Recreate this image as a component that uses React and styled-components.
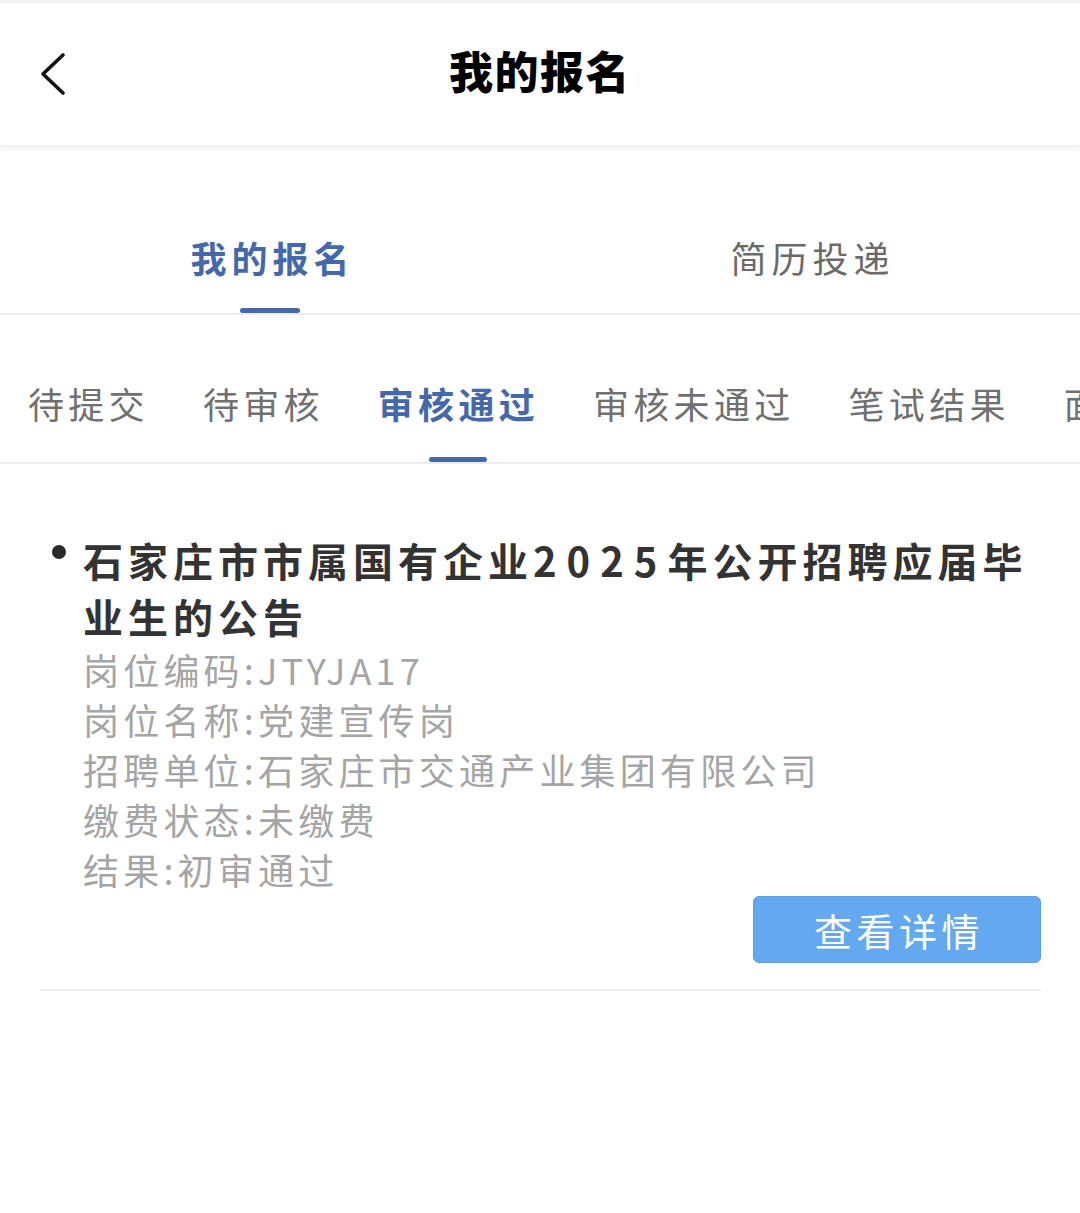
import styled, { createGlobalStyle } from "styled-components"

const GlobalStyle = createGlobalStyle`
  body {
    margin: 0;
    background: #ffffff;
    font-family: "Noto Sans CJK SC", "Noto Sans", sans-serif;
  }
`

const topTabs = ["我的报名", "简历投递"]
const statusTabs = ["待提交", "待审核", "审核通过", "审核未通过", "笔试结果", "面试结果"]

const details = [
    "岗位编码:JTYJA17",
    "岗位名称:党建宣传岗",
    "招聘单位:石家庄市交通产业集团有限公司",
    "缴费状态:未缴费",
    "结果:初审通过",
]

const App = () => {
    return (
        <Page>
            <GlobalStyle />
            <Header>
                <BackButton aria-label="返回">
                    <svg width="30" height="44" viewBox="0 0 30 44">
                        <polyline points="25,3 5,22 25,41" fill="none" stroke="#111" strokeWidth="3.6" strokeLinecap="round" strokeLinejoin="round" />
                    </svg>
                </BackButton>
                <HeaderTitle>我的报名</HeaderTitle>
            </Header>

            <TopTabBar>
                {topTabs.map((t, i) => (
                    <TopTab key={t}>
                        <TopTabLabel $active={i === 0}>{t}</TopTabLabel>
                        <Indicator $active={i === 0} $w={60} $gap={29} />
                    </TopTab>
                ))}
            </TopTabBar>

            <StatusTabBar>
                {statusTabs.map((t, i) => (
                    <StatusTab key={t}>
                        <StatusLabel $active={i === 2}>{t}</StatusLabel>
                        <Indicator $active={i === 2} $w={58} $gap={32} />
                    </StatusTab>
                ))}
            </StatusTabBar>

            <Card>
                <CardTitle>
                    石家庄市市属国有企业<Num>2025</Num>年公开招聘应届毕业生的公告
                </CardTitle>
                {details.map((d) => (
                    <DetailLine key={d}>{d}</DetailLine>
                ))}
                <Actions>
                    <DetailButton>查看详情</DetailButton>
                </Actions>
            </Card>
        </Page>
    )
}

const Page = styled.div`
  min-height: 1213px;
  background: #ffffff;
  overflow: hidden;
`

const Header = styled.header`
  position: relative;
  height: 142px;
  border-top: 3px solid #f1f1f1;
  display: flex;
  align-items: center;
  justify-content: center;
  box-shadow: 0 3px 5px rgba(0, 0, 0, 0.05);
  border-bottom: 2px solid #f2f2f2;
`

const BackButton = styled.button`
  position: absolute;
  left: 38px;
  top: 49px;
  padding: 0;
  border: none;
  background: none;
  display: flex;
`

const HeaderTitle = styled.h1`
  margin: 0;
  font-size: 44px;
  font-weight: 900;
  letter-spacing: 1.5px;
  color: #000;
  line-height: 1;
  margin-top: -8px;
`

const TopTabBar = styled.nav`
  display: flex;
  border-bottom: 2px solid #ececec;
`

const TopTab = styled.div`
  flex: 1;
  display: flex;
  flex-direction: column;
  align-items: center;
  padding-top: 89px;
`

const TopTabLabel = styled.span`
  font-size: 36px;
  line-height: 43px;
  letter-spacing: 5px;
  padding-left: 5px;
  font-weight: ${({ $active }) => ($active ? 700 : 400)};
  color: ${({ $active }) => ($active ? "#4468aa" : "#6a6a6a")};
`

const Indicator = styled.i`
  display: block;
  width: ${({ $w }) => $w}px;
  height: 5px;
  border-radius: 3px;
  margin-top: ${({ $gap }) => $gap}px;
  background: ${({ $active }) => ($active ? "#4468aa" : "transparent")};
`

const StatusTabBar = styled.nav`
  display: flex;
  gap: 54px;
  padding-left: 28px;
  white-space: nowrap;
  border-bottom: 2px solid #ececec;
`

const StatusTab = styled.div`
  flex-shrink: 0;
  display: flex;
  flex-direction: column;
  align-items: center;
  padding-top: 67px;
`

const StatusLabel = styled.span`
  font-size: 36px;
  line-height: 43px;
  letter-spacing: 4.3px;
  font-weight: ${({ $active }) => ($active ? 700 : 400)};
  color: ${({ $active }) => ($active ? "#4468aa" : "#707070")};
`

const Card = styled.section`
  margin: 0 39px 0 40px;
  padding: 68px 0 26px 43px;
  border-bottom: 2px solid #ececec;
`

const CardTitle = styled.h2`
  position: relative;
  margin: 0;
  width: 958px;
  font-size: 40px;
  line-height: 56px;
  font-weight: 700;
  letter-spacing: 5px;
  color: #333333;

  &::before {
    content: "";
    position: absolute;
    left: -31px;
    top: 13px;
    width: 14px;
    height: 14px;
    border-radius: 50%;
    background: #2a2a2a;
  }
`

const Num = styled.span`
  letter-spacing: 10px;
`

const DetailLine = styled.p`
  margin: 0;
  font-size: 36px;
  line-height: 50px;
  letter-spacing: 4.2px;
  color: #a5a5a5;
`

const Actions = styled.div`
  display: flex;
  justify-content: flex-end;
  margin-top: 2px;
`

const DetailButton = styled.button`
  width: 288px;
  height: 67px;
  border: 1px solid #5b9fe3;
  border-radius: 6px;
  background: #64a9ef;
  color: #ffffff;
  font-family: "Noto Sans CJK SC", sans-serif;
  font-size: 38px;
  letter-spacing: 4.5px;
  padding: 0 0 0 4px;
`

export default App
